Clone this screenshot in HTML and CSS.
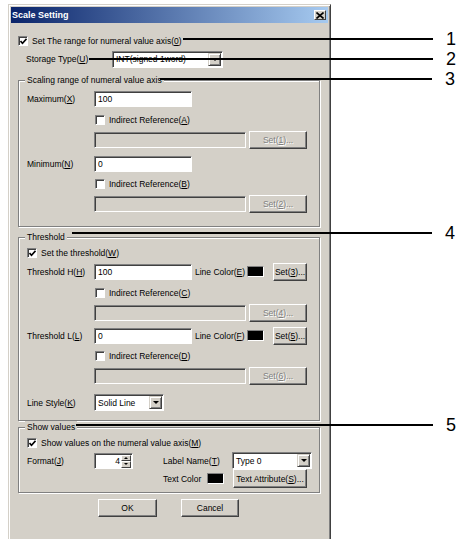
FILE: index.html
```html
<!DOCTYPE html>
<html lang="en">
<head>
    <meta charset="UTF-8">
    <title>Scale Setting</title>
    <link rel="stylesheet" href="styles.css">
</head>
<body>
<div class="page">
    <div class="dialog">
        <div class="titlebar">
            <span class="title">Scale Setting</span>
            <span class="close">
                <svg width="8" height="7" viewBox="0 0 8 7"><path d="M0.5 0.5 L7.5 6.5 M7.5 0.5 L0.5 6.5" stroke="#000" stroke-width="1.6"/></svg>
            </span>
        </div>

        <div class="content">
            <div class="row top-check">
                <span class="box checked"></span>
                <span>Set The range for numeral value axis(<u>0</u>)</span>
            </div>
            <div class="row storage">
                <span class="storage-label">Storage Type(<u>U</u>)</span>
                <div class="combo storage-combo">
                    <span class="combo-text">INT(signed 1word)</span>
                    <span class="drop"></span>
                </div>
            </div>

            <!-- Scaling range -->
            <div class="group scaling">
                <div class="legend">Scaling range of numeral value axis</div>
                <div class="row max-row">
                    <span class="lbl">Maximum(<u>X</u>)</span>
                    <div class="edit">100</div>
                </div>
                <div class="row sub ref-a">
                    <span class="box"></span><span>Indirect Reference(<u>A</u>)</span>
                </div>
                <div class="row sub">
                    <div class="edit disabled long"></div>
                    <div class="btn disabled set">Set(<u>1</u>)...</div>
                </div>
                <div class="row min-row">
                    <span class="lbl">Minimum(<u>N</u>)</span>
                    <div class="edit">0</div>
                </div>
                <div class="row sub">
                    <span class="box"></span><span>Indirect Reference(<u>B</u>)</span>
                </div>
                <div class="row sub">
                    <div class="edit disabled long"></div>
                    <div class="btn disabled set">Set(<u>2</u>)...</div>
                </div>
            </div>

            <!-- Threshold -->
            <div class="group threshold">
                <div class="legend">Threshold</div>
                <div class="row check-row">
                    <span class="box checked"></span><span>Set the threshold(<u>W</u>)</span>
                </div>
                <div class="row h-row">
                    <span class="lbl">Threshold H(<u>H</u>)</span>
                    <div class="edit">100</div>
                    <span class="color-lbl">Line Color(<u>E</u>)</span>
                    <span class="swatch"></span>
                    <div class="btn small">Set(<u>3</u>)...</div>
                </div>
                <div class="row sub ref-c">
                    <span class="box"></span><span>Indirect Reference(<u>C</u>)</span>
                </div>
                <div class="row sub">
                    <div class="edit disabled long"></div>
                    <div class="btn disabled set">Set(<u>4</u>)...</div>
                </div>
                <div class="row l-row">
                    <span class="lbl">Threshold L(<u>L</u>)</span>
                    <div class="edit">0</div>
                    <span class="color-lbl">Line Color(<u>F</u>)</span>
                    <span class="swatch"></span>
                    <div class="btn small">Set(<u>5</u>)...</div>
                </div>
                <div class="row sub">
                    <span class="box"></span><span>Indirect Reference(<u>D</u>)</span>
                </div>
                <div class="row sub">
                    <div class="edit disabled long"></div>
                    <div class="btn disabled set">Set(<u>6</u>)...</div>
                </div>
                <div class="row style-row">
                    <span class="lbl">Line Style(<u>K</u>)</span>
                    <div class="combo style-combo">
                        <span class="combo-text">Solid Line</span>
                        <span class="drop"></span>
                    </div>
                </div>
            </div>

            <!-- Show values -->
            <div class="group show">
                <div class="legend">Show values</div>
                <div class="row check-row">
                    <span class="box checked"></span><span>Show values on the numeral value axis(<u>M</u>)</span>
                </div>
                <div class="row format-row">
                    <span class="lbl">Format(<u>J</u>)</span>
                    <div class="spin">
                        <span class="spin-val">4</span>
                        <span class="spin-btns"><span class="up"></span><span class="down"></span></span>
                    </div>
                    <span class="name-lbl">Label Name(<u>T</u>)</span>
                    <div class="combo name-combo">
                        <span class="combo-text">Type 0</span>
                        <span class="drop"></span>
                    </div>
                </div>
                <div class="row color-row">
                    <span class="text-color">Text Color</span>
                    <span class="swatch"></span>
                    <div class="btn attr">Text Attribute(<u>S</u>)...</div>
                </div>
            </div>

            <div class="actions">
                <div class="btn ok">OK</div>
                <div class="btn cancel">Cancel</div>
            </div>
        </div>
    </div>

    <!-- callout lines over the dialog -->
    <div class="callout c1"><span class="line"></span><span class="num">1</span></div>
    <div class="callout c2"><span class="line"></span><span class="num">2</span></div>
    <div class="callout c3"><span class="line"></span><span class="num">3</span></div>
    <div class="callout c4"><span class="line"></span><span class="num">4</span></div>
    <div class="callout c5"><span class="line"></span><span class="num">5</span></div>
</div>
</body>
</html>
```

FILE: styles.css
```css
/* Win2000 style dialog */
body {
    margin: 0;
    background: #fff;
    font-family: "Liberation Sans", Arial, sans-serif;
    font-size: 8.5px;
    color: #000;
}

u {
    text-decoration: underline;
    text-underline-offset: 1px;
}

.page {
    position: relative;
    width: 467px;
    height: 539px;
    overflow: hidden;
}

.dialog {
    margin: 4px 0 0 8px;
    width: 317px;
    height: 540px;
    background: #d4d0c8;
    border: 1px solid;
    border-color: #d4d0c8 #404040 #404040 #d4d0c8;
    box-shadow: inset 1px 1px 0 #fff, inset -1px -1px 0 #808080;
    padding: 2px;
}

.titlebar {
    height: 16px;
    background: linear-gradient(to right, #0a246a, #a6caf0);
    display: flex;
    align-items: center;
    justify-content: space-between;
    padding: 0 2px 0 1px;
}

.title {
    color: #fff;
    font-weight: bold;
    font-size: 9px;
}

.close {
    width: 12px;
    height: 10px;
    box-sizing: border-box;
    background: #d4d0c8;
    border: 1px solid;
    border-color: #fff #404040 #404040 #fff;
    display: flex;
    align-items: center;
    justify-content: center;
}

.content {
    padding: 0 7px;
}

.row {
    display: flex;
    align-items: center;
    height: 17px;
    white-space: nowrap;
}

/* checkbox */
.box {
    width: 8px;
    height: 8px;
    background: #fff;
    border: 1px solid;
    border-color: #808080 #fff #fff #808080;
    box-shadow: inset 1px 1px 0 #404040;
    margin-right: 4px;
    flex: none;
    position: relative;
}

.box.checked::after {
    content: "";
    position: absolute;
    left: 1px;
    top: 1px;
    width: 7px;
    height: 7px;
    background: url("data:image/svg+xml,%3Csvg xmlns='http://www.w3.org/2000/svg' width='7' height='7'%3E%3Cpath d='M0.5 3 L2.5 5.3 L6.5 0.8' stroke='black' stroke-width='1.6' fill='none'/%3E%3C/svg%3E") no-repeat;
}

.top-check {
    margin-top: 9px;
}

.storage {
    margin-top: 1px;
    height: 18px;
}

.storage-label {
    width: 94px;
    padding-left: 8px;
    box-sizing: border-box;
    flex: none;
}

/* edits and combos */
.edit {
    width: 98px;
    height: 16px;
    box-sizing: border-box;
    background: #fff;
    border: 1px solid;
    border-color: #808080 #fff #fff #808080;
    box-shadow: inset 1px 1px 0 #404040;
    padding: 1px 0 0 3px;
    line-height: 13px;
    flex: none;
}

.edit.disabled {
    background: #d4d0c8;
}

.edit.long {
    width: 152px;
}

.combo {
    height: 17px;
    box-sizing: border-box;
    background: #fff;
    border: 1px solid;
    border-color: #808080 #fff #fff #808080;
    box-shadow: inset 1px 1px 0 #404040;
    display: flex;
    align-items: center;
    justify-content: space-between;
    padding: 1px 1px 1px 3px;
    flex: none;
}

.drop {
    width: 13px;
    height: 13px;
    box-sizing: border-box;
    background: #d4d0c8;
    border: 1px solid;
    border-color: #d4d0c8 #404040 #404040 #d4d0c8;
    box-shadow: inset 1px 1px 0 #fff, inset -1px -1px 0 #808080;
    position: relative;
}

.drop::after {
    content: "";
    position: absolute;
    left: 3px;
    top: 4px;
    border-left: 3px solid transparent;
    border-right: 3px solid transparent;
    border-top: 3px solid #000;
}

.storage-combo {
    width: 111px;
}

.style-combo {
    width: 70px;
}

.name-combo {
    width: 80px;
}

/* group boxes */
.group {
    border: 1px solid #808080;
    box-shadow: 1px 1px 0 #fff, inset 1px 1px 0 #fff;
    padding: 0 0 0 8px;
    width: 302px;
    box-sizing: border-box;
}

.legend {
    margin: -7px 0 0 -2px;
    background: #d4d0c8;
    padding: 0 2px;
    width: max-content;
    line-height: 13px;
    height: 13px;
}

.lbl {
    width: 67px;
    flex: none;
}

.sub {
    padding-left: 67px;
    margin-top: 3px;
}

.sub .box {
    margin-left: 1px;
}

.scaling {
    margin-top: 12px;
    padding-bottom: 14px;
}

.max-row {
    margin-top: 3px;
}

.ref-a {
    margin-top: 4px;
}

.min-row {
    margin-top: 7px;
}

.threshold {
    margin-top: 10px;
    padding-bottom: 9px;
}

.h-row {
    margin-top: 2px;
}

.ref-c {
    margin-top: 4px;
}

.l-row {
    margin-top: 6px;
}

.style-row {
    margin-top: 10px;
}

.color-lbl {
    width: 52px;
    margin-left: 3px;
    flex: none;
}

.swatch {
    width: 15px;
    height: 9px;
    background: #000;
    border: 1px solid;
    border-color: #808080 #fff #fff #808080;
    flex: none;
}

/* buttons */
.btn {
    height: 18px;
    box-sizing: border-box;
    background: #d4d0c8;
    border: 1px solid;
    border-color: #fff #404040 #404040 #fff;
    box-shadow: inset -1px -1px 0 #808080;
    display: flex;
    align-items: center;
    justify-content: center;
    flex: none;
}

.btn.disabled {
    color: #808080;
    text-shadow: 1px 1px 0 #fff;
}

.set {
    width: 58px;
    margin-left: 3px;
}

.small {
    width: 34px;
    margin-left: 9px;
}

.attr {
    width: 74px;
    height: 19px;
    margin-left: 9px;
}

.show {
    margin-top: 6px;
    padding-bottom: 4px;
}

.format-row {
    margin-top: 1px;
}

.spin {
    width: 39px;
    height: 16px;
    box-sizing: border-box;
    background: #fff;
    border: 1px solid;
    border-color: #808080 #fff #fff #808080;
    box-shadow: inset 1px 1px 0 #404040;
    display: flex;
    justify-content: flex-end;
    align-items: center;
    padding: 1px 1px 0 0;
    flex: none;
}

.spin-val {
    margin-right: 1px;
}

.spin-btns {
    display: flex;
    flex-direction: column;
    width: 10px;
    height: 13px;
}

.spin-btns span {
    flex: 1;
    background: #d4d0c8;
    border: 1px solid;
    border-color: #fff #404040 #404040 #fff;
    position: relative;
}

.spin-btns .up::after,
.spin-btns .down::after {
    content: "";
    position: absolute;
    left: 2px;
    top: 1px;
    border-left: 2px solid transparent;
    border-right: 2px solid transparent;
}

.spin-btns .up::after {
    border-bottom: 2px solid #000;
}

.spin-btns .down::after {
    border-top: 2px solid #000;
}

.name-lbl {
    margin-left: 30px;
    width: 69px;
    flex: none;
}

.color-row {
    height: 19px;
    padding-left: 136px;
}

.text-color {
    width: 44px;
    flex: none;
}

.actions {
    display: flex;
    margin-top: 6px;
    padding-left: 80px;
}

.ok {
    width: 59px;
}

.cancel {
    width: 58px;
    margin-left: 24px;
}

/* callouts */
.callout {
    position: absolute;
    height: 20px;
    display: flex;
    align-items: center;
}

.callout .line {
    height: 2px;
    background: #000;
    flex: none;
}

.callout .num {
    position: absolute;
    left: 100%;
    margin-left: 13px;
    font-family: "Liberation Sans", Arial, sans-serif;
    font-size: 18px;
    line-height: 20px;
}

.c1 { left: 183px; top: 29px; }
.c1 .line { width: 250px; }
.c2 { left: 89px; top: 49px; }
.c2 .line { width: 344px; }
.c3 { left: 160px; top: 69px; }
.c3 .line { width: 272px; }
.c4 { left: 72px; top: 223px; }
.c4 .line { width: 360px; }
.c5 { left: 76px; top: 415px; }
.c5 .line { width: 357px; }
```
